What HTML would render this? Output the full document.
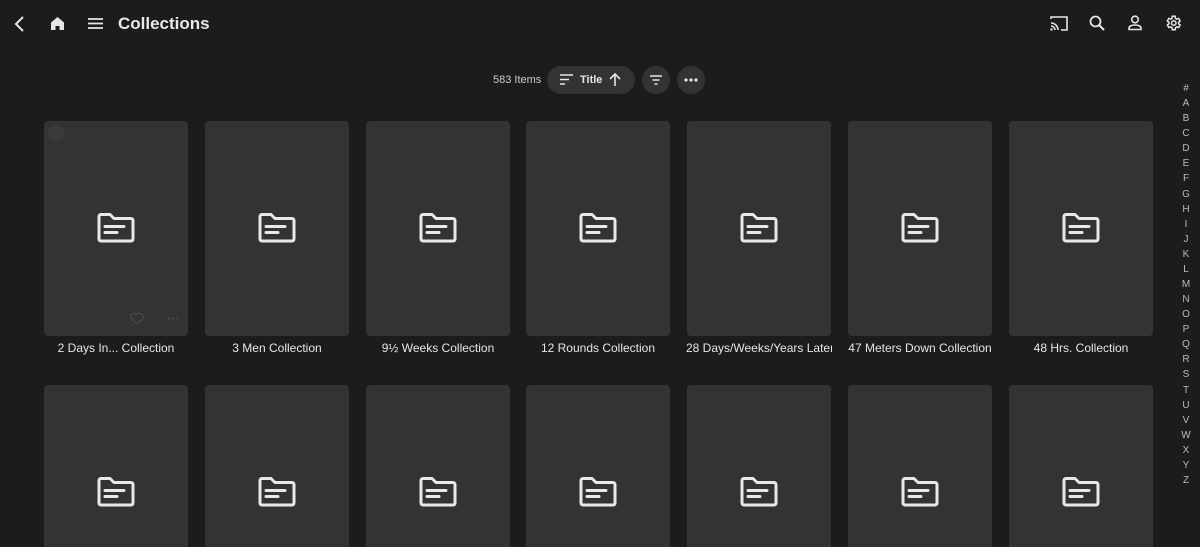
<!DOCTYPE html>
<html><head><meta charset="utf-8"><style>
*{margin:0;padding:0;box-sizing:border-box}
html,body{width:1200px;height:547px;overflow:hidden;background:#1c1c1c}
body{font-family:"Liberation Sans",sans-serif;color:#e6e6e6;position:relative}
.ic{position:absolute}
.title{position:absolute;left:118px;top:14px;font-size:17px;font-weight:bold;color:#e8e8e8}
.count{position:absolute;left:493px;top:74px;font-size:11px;color:#ccc}
.pill{position:absolute;top:66px;height:28px;background:#333;border-radius:14px}
.card{position:absolute;width:144px;height:215px;background:#333;border-radius:4px}
.card svg.f{position:absolute;left:52px;top:91px}
.lbl{position:absolute;width:146px;text-align:center;font-size:12px;color:#e6e6e6;white-space:nowrap;overflow:hidden}
.alpha{position:absolute;left:1178px;top:81px;width:16px;text-align:center;font-size:10px;line-height:15.08px;color:#bbb}
</style></head><body>
<svg class="ic" style="left:12px;top:15px" width="16" height="18" viewBox="0 0 16 18"><path d="M11 2L4 9l7 7" stroke="#e6e6e6" stroke-width="2" fill="none"/></svg>
<svg class="ic" style="left:50px;top:16px" width="15" height="15" viewBox="0 0 15 15"><path d="M7.5 1L1 6.5V14h4.5V10h4v4H14V6.5z" fill="#e6e6e6"/></svg>
<svg class="ic" style="left:88px;top:17px" width="15" height="13" viewBox="0 0 15 13"><path d="M0 2h15M0 6.5h15M0 11h15" stroke="#e6e6e6" stroke-width="1.8"/></svg>
<div class="title">Collections</div>
<svg class="ic" style="left:1050px;top:15px" width="18" height="16" viewBox="0 0 18 16"><path d="M1 4V2h16v13h-6M1 8a7 7 0 0 1 7 7M1 11a4 4 0 0 1 4 4" stroke="#e6e6e6" stroke-width="1.6" fill="none"/><circle cx="1.5" cy="14.5" r="1.2" fill="#e6e6e6"/></svg>
<svg class="ic" style="left:1089px;top:15px" width="16" height="16" viewBox="0 0 16 16"><circle cx="6.5" cy="6.5" r="5" stroke="#e6e6e6" stroke-width="1.8" fill="none"/><path d="M10 10l5 5" stroke="#e6e6e6" stroke-width="2"/></svg>
<svg class="ic" style="left:1128px;top:15px" width="14" height="16" viewBox="0 0 14 16"><circle cx="7" cy="4.5" r="3.3" stroke="#e6e6e6" stroke-width="1.6" fill="none"/><path d="M1 14.5v-1.5c0-2 3-3 6-3s6 1 6 3v1.5z" stroke="#e6e6e6" stroke-width="1.6" fill="none"/></svg>
<svg class="ic" style="left:1164px;top:14px" width="18" height="18" viewBox="0 0 24 24"><path d="M19.4 13a7.5 7.5 0 0 0 0-2l2.1-1.6-2-3.5-2.5 1a7.6 7.6 0 0 0-1.7-1L15 3h-4l-.4 2.9a7.6 7.6 0 0 0-1.7 1l-2.5-1-2 3.5L6.6 11a7.5 7.5 0 0 0 0 2l-2.1 1.6 2 3.5 2.5-1a7.6 7.6 0 0 0 1.7 1L11 21h4l.4-2.9a7.6 7.6 0 0 0 1.7-1l2.5 1 2-3.5z" stroke="#e6e6e6" stroke-width="2" fill="none"/><circle cx="13" cy="12" r="3" stroke="#e6e6e6" stroke-width="2" fill="none"/></svg>
<div class="count">583 Items</div>
<div class="pill" style="left:547px;width:88px"></div>
<svg class="ic" style="left:560px;top:74px" width="13" height="11" viewBox="0 0 13 11"><path d="M0 1h13M0 5.5h9M0 10h5" stroke="#e6e6e6" stroke-width="1.6"/></svg>
<div class="ic" style="left:580px;top:74px;font-size:11px;font-weight:bold">Title</div>
<svg class="ic" style="left:609px;top:73px" width="12" height="13" viewBox="0 0 12 13"><path d="M6 13V1M1 6l5-5 5 5" stroke="#e6e6e6" stroke-width="1.6" fill="none"/></svg>
<div class="pill" style="left:642px;width:28px"></div>
<svg class="ic" style="left:650px;top:75px" width="12" height="10" viewBox="0 0 12 10"><path d="M0 1h12M2.5 5h7M4.5 9h3" stroke="#e6e6e6" stroke-width="1.6"/></svg>
<div class="pill" style="left:677px;width:28px"></div>
<svg class="ic" style="left:684px;top:78px" width="14" height="4" viewBox="0 0 14 4"><circle cx="2" cy="2" r="1.6" fill="#e6e6e6"/><circle cx="7" cy="2" r="1.6" fill="#e6e6e6"/><circle cx="12" cy="2" r="1.6" fill="#e6e6e6"/></svg>
<div id="g"></div>
<div class="alpha">#<br>A<br>B<br>C<br>D<br>E<br>F<br>G<br>H<br>I<br>J<br>K<br>L<br>M<br>N<br>O<br>P<br>Q<br>R<br>S<br>T<br>U<br>V<br>W<br>X<br>Y<br>Z</div>
<script>
var names=["2 Days In... Collection","3 Men Collection","9½ Weeks Collection","12 Rounds Collection","28 Days/Weeks/Years Later","47 Meters Down Collection","48 Hrs. Collection"];
var f='<svg class="f" width="40" height="32" viewBox="0 0 40 32"><path d="M3 4.5a2 2 0 0 1 2-2h9l4 4h17a2 2 0 0 1 2 2V27a2 2 0 0 1-2 2H5a2 2 0 0 1-2-2z" stroke="#e8e8e8" stroke-width="3" fill="none" stroke-linejoin="round"/><path d="M9 14.5h19M9 20.5h12" stroke="#e8e8e8" stroke-width="3" stroke-linecap="round"/></svg>';
var extra='<div style="position:absolute;left:4px;top:4px;width:16px;height:16px;border-radius:50%;background:#3a3a3a"></div><svg style="position:absolute;left:86px;top:191px" width="14" height="13" viewBox="0 0 14 13"><path d="M7 12L1.8 7A3 3 0 0 1 7 2.5 3 3 0 0 1 12.2 7z" stroke="#4a4a4a" stroke-width="1.3" fill="none"/></svg><svg style="position:absolute;left:123px;top:196px" width="12" height="3"><circle cx="1.5" cy="1.5" r="1.2" fill="#4a4a4a"/><circle cx="6" cy="1.5" r="1.2" fill="#4a4a4a"/><circle cx="10.5" cy="1.5" r="1.2" fill="#4a4a4a"/></svg>';
var h='';
for(var r=0;r<2;r++)for(var i=0;i<7;i++){var x=Math.round(44+i*160.8),y=121+r*264;
h+='<div class="card" style="left:'+x+'px;top:'+y+'px">'+f+(r==0&&i==0?extra:'')+'</div>';
if(r==0)h+='<div class="lbl" style="left:'+(x-1)+'px;top:341px">'+names[i]+'</div>';}
document.getElementById('g').innerHTML=h;
</script>
</body></html>
